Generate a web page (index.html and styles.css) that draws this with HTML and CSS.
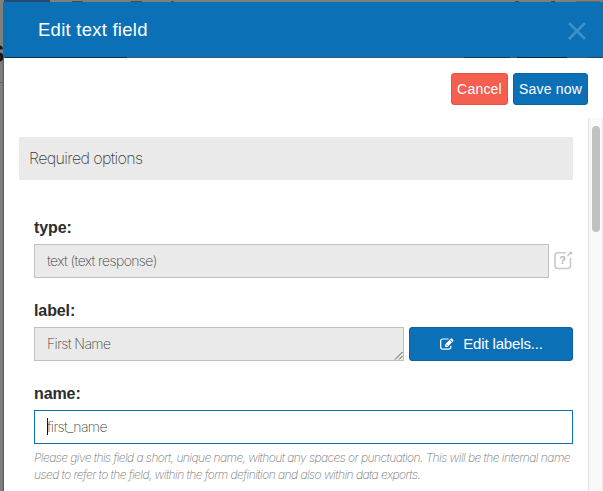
FILE: index.html
```html
<!DOCTYPE html>
<html lang="en">
<head>
<meta charset="utf-8">
<title>Edit text field</title>
<link rel="stylesheet" href="styles.css">
</head>
<body>
<div class="backdrop">
  <div class="page-tab"></div>
  <div class="page-top"><span class="frag f1"></span><span class="frag f2"></span><span class="frag f3"></span><span class="frag f4"></span><span class="frag f5"></span><span class="frag f6"></span></div>
  <div class="page-title">S</div>
  <div class="page-rule"></div>
</div>
<div class="modal">
  <header class="header">
    <h1>Edit text field</h1>
    <svg class="close" viewBox="0 0 18 18"><path d="M1 1L17 17M17 1L1 17"/></svg>
  </header>
  <div class="seam"><span class="seam-title"></span><span class="seam-label"></span><span class="seam-button"></span><span class="seam-end"></span></div>
  <div class="panel">
    <div class="actions">
      <button class="btn cancel">Cancel</button>
      <button class="btn save">Save now</button>
    </div>
    <div class="scroll">
      <main class="form">
        <h2>Required options</h2>
        <div class="fields">
          <label>type:</label>
          <div class="row">
            <div class="box disabled grow">text (text response)</div>
            <svg class="help" viewBox="0 0 19 19">
              <path class="frame" d="M12 1.8H4Q1 1.8 1 4.8V14.5Q1 17.5 4 17.5H13.5Q16.5 17.5 16.5 14.5V7"/>
              <path class="arrow" d="M13.4 5.1L17 1.5"/><path class="head" d="M15 .8H18.2V4Z"/>
              <text x="5.2" y="13.4">?</text>
            </svg>
          </div>
          <label>label:</label>
          <div class="row">
            <div class="box disabled area">First Name<svg class="grip" viewBox="0 0 9 9"><path d="M1 8.5L8.5 1M5 8.5L8.5 5"/></svg></div>
            <button class="btn edit"><svg viewBox="0 0 14 12"><path class="frame" d="M8.5 1H3Q.7 1 .7 3V9Q.7 11.2 3 11.2H8.5Q10.8 11.2 10.8 9V7.8"/><path class="pencil" d="M5 9V6.4L10.8.6Q11.3.1 11.9.6L13.3 2Q13.8 2.5 13.3 3L7.5 9Z"/><path class="cut" d="M9.8 1.8L12.2 4.2M6 6.5L7.5 8"/></svg><span>Edit labels...</span></button>
          </div>
          <label>name:</label>
          <div class="box active"><i class="caret"></i>first_name</div>
          <p class="hint">Please give this field a short, unique name, without any spaces or punctuation. This will be the internal name<br>used to refer to the field, within the form definition and also within data exports.</p>
        </div>
      </main>
      <div class="track"><div class="thumb"></div></div>
    </div>
  </div>
</div>
</body>
</html>
```
FILE: styles.css
```css
* { box-sizing: border-box; }
body { margin: 0; height: 491px; overflow: hidden; position: relative; background: #817f7d; font-family: "Liberation Sans", Arial, sans-serif; }
.backdrop { position: absolute; inset: 0; overflow: hidden; }
.page-tab { position: absolute; left: 4px; top: 0; width: 46px; height: 2px; background: #254a73; }
.frag { position: absolute; top: 1px; height: 1px; background: #4a4a49; }
.f1 { left: 72px; width: 11px; }
.f2 { left: 131px; width: 11px; }
.f3 { left: 171px; width: 3px; }
.f4 { left: 515px; width: 4px; }
.f5 { left: 551px; width: 4px; background: #24572d; }
.f6 { left: 576px; width: 24px; background: #686766; }
.page-title { position: absolute; left: -11px; top: 43px; font: bold 23px/23px "Liberation Sans", Arial, sans-serif; color: #151515; }
.page-rule { position: absolute; left: 0; top: 82px; width: 4px; height: 1px; background: #656463; }
.modal { position: absolute; left: 3px; top: 2px; width: 600px; height: 489px; display: flex; flex-direction: column; }
.header { height: 55px; flex: none; background: #0c70b7; display: flex; align-items: center; justify-content: space-between; padding: 0 17px 0 35px; }
h1 { margin: 0; color: #fff; font-size: 18.5px; font-weight: 400; line-height: 22px; letter-spacing: .25px; }
.close { width: 18px; height: 18px; margin-top: 3px; fill: none; stroke: #3f8fc8; stroke-width: 2.6; }
.seam { height: 1px; flex: none; position: relative; background: #355f80; }
.seam span { position: absolute; top: 0; height: 1px; background: #0a2033; }
.seam-title { left: 2px; width: 122px; opacity: .75; }
.seam-label { left: 461px; width: 46px; opacity: .6; }
.seam-button { left: 514px; width: 50px; }
.seam-end { left: 584px; width: 16px; opacity: .4; }
.panel { flex: 1; margin-left: 1px; background: #fff; min-height: 0; display: flex; flex-direction: column; box-shadow: -1px 0 1px #5d5c5b; }
.actions { height: 60px; flex: none; padding: 15px 15px 0 0; display: flex; justify-content: flex-end; gap: 5px; }
.btn { border: 1px solid #0b639f; border-radius: 3px; background: #0c70b7; color: #fff; font: 14px/20px "Liberation Sans", Arial, sans-serif; letter-spacing: .2px; padding: 0; height: 32px; white-space: nowrap; }
.cancel { width: 57px; background: #f45f50; border-color: #ed5043; }
.save { width: 75px; }
.scroll { flex: 1; min-height: 0; display: flex; }
.form { flex: 1; padding: 19px 15px 0; min-width: 0; overflow: hidden; }
h2 { margin: 0 0 37px; height: 43px; padding-left: 10px; background: #eaeaea; color: #3c3c3c; font: 200 16px/43px Inter, sans-serif; letter-spacing: -.63px; }
.fields { padding-left: 15px; }
label { display: block; height: 27px; font-size: 16px; font-weight: 700; line-height: 21px; letter-spacing: -.1px; color: #2c2c2c; }
.row { display: flex; gap: 5px; margin-bottom: 22px; }
.box { position: relative; height: 34px; border: 1px solid #c0c0c0; padding-left: 12px; font: 200 14px/32px Inter, sans-serif; letter-spacing: -.6px; color: #444; background: #fff; white-space: nowrap; }
.disabled { background: #eaeaea; }
.grow { flex: 1; }
.area { width: 370px; }
.help { width: 19px; height: 19px; margin: 7px 0 0; fill: none; }
.help .frame { stroke: #c9c9c9; stroke-width: 1.6; }
.help .arrow { stroke: #bdbdbd; stroke-width: 1.2; }
.help .head { fill: #bdbdbd; }
.help text { fill: #b5b5b5; font: bold 11px "Liberation Sans", Arial, sans-serif; }
.grip { position: absolute; right: 0; bottom: 0; width: 9px; height: 9px; stroke: #555; fill: none; }
.edit { flex: 1; height: 34px; display: flex; align-items: center; justify-content: center; gap: 9px; font-size: 15px; letter-spacing: -.15px; padding-left: 1px; }
.edit svg { width: 14px; height: 12px; }
.edit .frame { fill: none; stroke: #fff; stroke-width: 1.2; }
.edit .pencil { fill: #fff; }
.edit .cut { fill: none; stroke: #0c70b7; stroke-width: .8; }
.active { border-color: #0c70b7; }
.caret { position: absolute; left: 12px; top: 7px; width: 1px; height: 17px; background: #111; }
.hint { margin: 5px 0 0; font: italic 200 12px/17px Inter, sans-serif; letter-spacing: -.55px; color: #777; white-space: nowrap; }
.track { width: 15px; background: #f9f9f9; border-left: 1px solid #e2e2e2; border-right: 1px solid #ebebeb; padding: 8px 0 0 3px; }
.thumb { width: 8px; height: 106px; border-radius: 4px; background: #c1c1c1; }
```
